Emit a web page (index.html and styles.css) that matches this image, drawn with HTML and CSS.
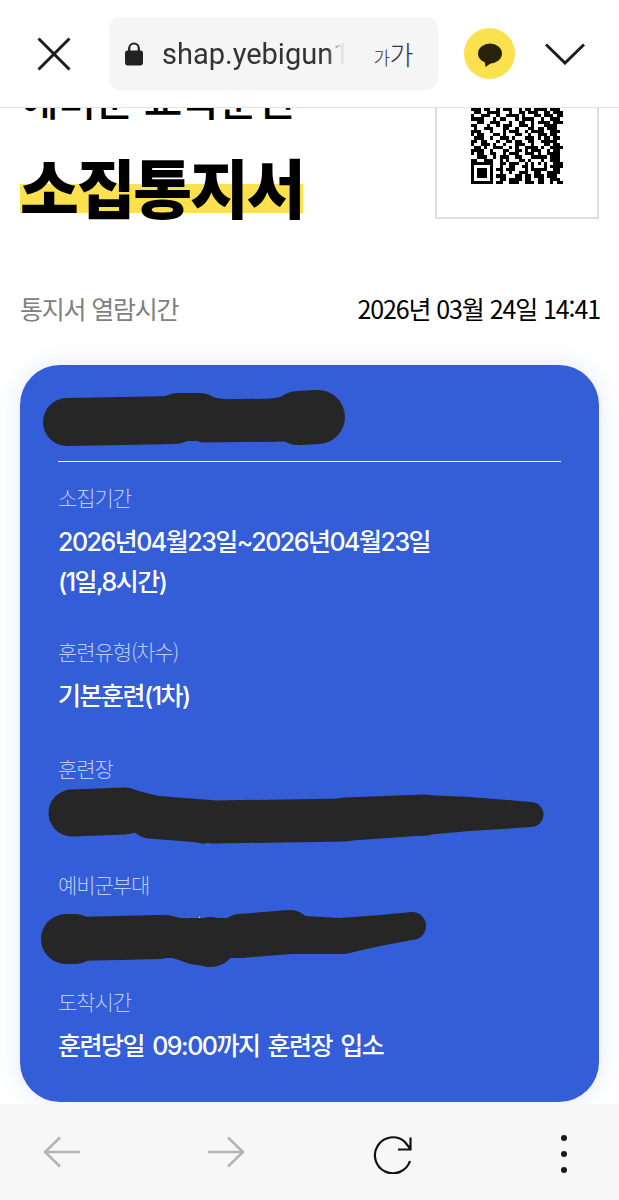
FILE: index.html
```html
<!DOCTYPE html>
<html lang="ko">
<head>
<meta charset="utf-8">
<title>소집통지서</title>
<link rel="stylesheet" href="styles.css">
</head>
<body>
<div class="screen">
  <header class="topbar">
    <button class="icon-btn close-btn" aria-label="닫기">
      <svg width="34" height="34" viewBox="0 0 34 34"><path d="M1.5 1.5 32.5 32.5M32.5 1.5 1.5 32.5" class="ink-line"/></svg>
    </button>
    <div class="url-pill">
      <svg class="lock" width="20" height="24" viewBox="0 0 20 24"><path d="M5.2 9V6.3a4.8 4.8 0 0 1 9.6 0V9" fill="none" stroke="#222" stroke-width="2.2"/><rect x="1" y="8.5" width="18" height="15" rx="2.4" fill="#222"/></svg>
      <span class="url-text">shap.yebigun1</span>
      <span class="text-size"><span class="small">가</span>가</span>
    </div>
    <span class="kakao">
      <svg width="26" height="24" viewBox="0 0 26 24"><ellipse cx="13" cy="10.500" rx="12" ry="10" fill="#2a2208"/><path d="M7.500 17 8.500 24 15 19.500Z" fill="#2a2208"/></svg>
    </span>
    <button class="icon-btn chevron-btn" aria-label="펼치기">
      <svg width="40" height="22" viewBox="0 0 40 22"><path d="M1 1.500 20 20 39 1.500" class="ink-line"/></svg>
    </button>
  </header>

  <main class="content">
    <section class="hero">
      <div class="hero-titles">
        <p class="subtitle">예비군 교육훈련</p>
        <h1 class="title"><span class="marker">소집통지서</span></h1>
      </div>
      <div class="qr-box">
        <svg class="qr" width="92" height="92" viewBox="0 0 29 29" shape-rendering="crispEdges">
          <path class="qr-ink" d="M0 5.500h3m1 0h2m2 0h1m1 0h3m2 0h1m1 0h2m1 0h4m1 0h3
          M1 6.500h2m2 0h4m3 0h1m2 0h2m1 0h3m2 0h2m1 0h3
          M0 7.500h1m2 0h3m2 0h1m2 0h4m1 0h1m3 0h2m1 0h3m1 0h2
          M0 8.500h4m3 0h1m1 0h2m3 0h1m1 0h4m2 0h1m2 0h3
          M2 9.500h2m2 0h3m3 0h1m2 0h2m2 0h1m1 0h4m1 0h3
          M0 10.500h2m3 0h1m2 0h1m1 0h3m2 0h3m1 0h1m3 0h4
          M1 11.500h1m2 0h3m3 0h2m2 0h1m3 0h2m1 0h2m1 0h3
          M0 12.500h3m3 0h1m3 0h1m1 0h3m2 0h1m1 0h4m2 0h3
          M0 13.500h1m1 0h2m3 0h2m1 0h1m3 0h2m2 0h1m2 0h3m1 0h2
          M1 14.500h3m2 0h1m2 0h3m1 0h1m3 0h3m1 0h1m1 0h2m1 0h2
          M0 15.500h2m1 0h2m3 0h1m2 0h2m1 0h2m2 0h2m2 0h5
          M0 16.500h1m2 0h3m1 0h1m2 0h1m3 0h3m2 0h1m3 0h2m1 0h2
          M1 17.500h2m1 0h1m2 0h3m2 0h1m1 0h1m2 0h4m1 0h1m2 0h4
          M0 18.500h4m2 0h1m3 0h2m2 0h2m1 0h1m1 0h3m2 0h1m1 0h2
          M0 19.500h1m1 0h2m2 0h2m2 0h1m1 0h3m2 0h3m1 0h1m2 0h4
          M2 20.500h3m2 0h1m1 0h3m2 0h2m3 0h5m1 0h3
          M0 21.500h2m2 0h3m2 0h1m1 0h1m3 0h2m1 0h1m3 0h1m2 0h3
          M0 22.500h7m2 0h2m1 0h3m2 0h1m1 0h1m1 0h1m1 0h1m2 0h3
          M0 23.500h1m5 0h1m2 0h1m2 0h2m2 0h2m1 0h1m3 0h1m1 0h4
          M0 24.500h1m1 0h3m1 0h1m1 0h2m1 0h3m3 0h1m1 0h5m2 0h2
          M0 25.500h1m1 0h3m1 0h1m2 0h1m2 0h1m2 0h3m2 0h2m2 0h4
          M0 26.500h1m1 0h3m1 0h1m1 0h3m3 0h2m1 0h2m1 0h3m1 0h3
          M0 27.500h1m5 0h1m2 0h2m1 0h4m1 0h2m2 0h2m2 0h3
          M0 28.500h7m1 0h2m2 0h3m2 0h3m1 0h2m2 0h1m1 0h2"/>
        </svg>
      </div>
    </section>

    <div class="meta-row">
      <span class="meta-label">통지서 열람시간</span>
      <span class="meta-value">2026년 03월 24일 14:41</span>
    </div>

    <section class="card">
      <div class="card-name"></div>
      <div class="field field-first">
        <p class="field-label">소집기간</p>
        <p class="field-value">2026년04월23일~2026년04월23일<br>(1일,8시간)</p>
      </div>
      <div class="field">
        <p class="field-label">훈련유형(차수)</p>
        <p class="field-value">기본훈련(1차)</p>
      </div>
      <div class="field">
        <p class="field-label">훈련장</p>
        <p class="field-value field-hidden">&nbsp;</p>
      </div>
      <div class="field">
        <p class="field-label">예비군부대</p>
        <p class="field-value field-hidden">&nbsp;</p>
      </div>
      <div class="field">
        <p class="field-label">도착시간</p>
        <p class="field-value">훈련당일 09:00까지 훈련장 입소</p>
      </div>
      <svg class="redactions" viewBox="20 365 579 737" aria-hidden="true">
        <path class="speck" d="M185 921l2-4 1 4zM196 921l4-5-1 6z"/>
        <g class="marker-stroke">
          <path d="M67 422 175 420" stroke-width="48"/>
          <path d="M178 417 200 417" stroke-width="48"/>
          <path d="M205 421 285 420" stroke-width="43"/>
          <path d="M298 418 318 417" stroke-width="54"/>

          <path d="M72 813 125 811" stroke-width="47"/>
          <path d="M150 817 215 822 345 820" stroke-width="43"/>
          <path d="M345 818 425 815" stroke-width="41"/>
          <path d="M531 814.500 531 814.500" stroke-width="25"/>

          <path d="M66 939 75 939" stroke-width="50"/>
          <path d="M75 939 160 937" stroke-width="44"/>
          <path d="M160 938 240 938" stroke-width="40"/>
          <path d="M210 942 211 942" stroke-width="50"/>
          <path d="M240 936 290 932" stroke-width="44"/>
          <path d="M412 926 412 926" stroke-width="28"/>
        </g>
        <path class="taper" d="M150 399 180 393 205 396 235 401V415H150Z"/>
        <path class="taper" d="M250 401 275 398 300 392 320 390V410H250Z"/>
        <path class="taper" d="M270 442 295 439 310 444V425H270Z"/>
        <path class="taper" d="M110 790 135 790 170 799 215 801V815H110Z"/>
        <path class="taper" d="M110 834 130 832 170 838 205 844V820H110Z"/>
        <path class="taper" d="M345 841 430 835V815H345Z"/>
        <path class="taper" d="M425 795 470 797 531 802V827L470 831 425 835Z"/>
        <path class="taper" d="M288 910 305 916 340 918 380 915 412 912V940L380 946 345 954 290 954Z"/>
        <path class="taper" d="M150 917 168 915 192 921 230 918V950H150Z"/>
        <path class="taper" d="M120 960 150 958 170 957 190 964 210 967V940H120Z"/>
      </svg>
    </section>
  </main>

  <nav class="bottombar">
    <svg class="nav-icon" width="38" height="32" viewBox="0 0 38 32"><path d="M37 16H2M17 1.500 2 16 17 30.500" class="muted-line"/></svg>
    <svg class="nav-icon" width="38" height="32" viewBox="0 0 38 32"><path d="M1 16H36M21 1.500 36 16 21 30.500" class="muted-line"/></svg>
    <svg class="nav-icon reload" width="40" height="38" viewBox="0 0 40 38"><path d="M37 25A18 18 0 1 1 31.500 5.500L37.500 13M37.500 1.500V13.500H25" class="ink-thin"/></svg>
    <span class="dots"><i></i><i></i><i></i></span>
  </nav>
</div>
</body>
</html>
```

FILE: styles.css
```css
* { box-sizing: border-box; }
html, body { margin: 0; padding: 0; background: #fff; }
body { font-family: "Noto Sans CJK KR", "Noto Sans", sans-serif; color: #000; }
p, h1 { margin: 0; }

.screen { width: 619px; height: 1200px; display: flex; flex-direction: column; overflow: hidden; }

/* top browser bar */
.topbar {
  height: 108px; flex: none; background: #fff; border-bottom: 1px solid #e4e4e4;
  display: flex; align-items: center; padding: 0 33px 0 37px;
}
.icon-btn { border: 0; padding: 0; background: none; display: flex; }
.ink-line { fill: none; stroke: #1c1c1c; stroke-width: 3; }
.close-btn { margin-right: 38px; }
.url-pill {
  width: 329px; height: 73px; background: #f5f5f5; border-radius: 12px;
  display: flex; align-items: center; padding: 0 25px 0 15px; margin-top: 0;
}
.lock { flex: none; margin-right: 18px; }
.url-text {
  width: 184px; overflow: hidden; white-space: nowrap; font-family: Roboto, sans-serif;
  font-size: 29px; color: #333; flex: none;
  -webkit-mask-image: linear-gradient(to right, #000 90%, rgba(0, 0, 0, .1) 97%);
  mask-image: linear-gradient(to right, #000 90%, rgba(0, 0, 0, .1) 97%);
}
.text-size { margin-left: auto; font-size: 26px; color: #333; letter-spacing: -.5px; line-height: 1; font-weight: 300; }
.small { font-size: 18px; }
.kakao {
  width: 51px; height: 51px; border-radius: 50%; background: #fbe14e; flex: none;
  display: flex; align-items: center; justify-content: center; margin: 0 30px 0 26px; padding-top: 2px;
}

/* scrolled page content */
.content { flex: 1; min-height: 0; overflow: hidden; padding: 0 20px; }
.hero { display: flex; justify-content: space-between; align-items: flex-end; margin-top: -52px; height: 163px; }
.hero-titles { display: flex; flex-direction: column; align-items: flex-start; }
.subtitle { font-size: 42px; line-height: 48px; font-weight: 500; letter-spacing: -1px; margin-bottom: 28px; }
.title { font-size: 64px; line-height: 70px; font-weight: 900; letter-spacing: -2.200px; margin-bottom: -1px; }
.marker {
  display: inline-block;
  background: linear-gradient(#fbe14e, #fbe14e) no-repeat 0 34px / 100% 29px;
  height: 70px;
}
.qr-box {
  width: 164px; height: 164px; border: 2px solid #dedede; flex: none;
  display: flex; align-items: flex-start; justify-content: flex-start; padding: 35px 0 0 34px;
}
.qr { display: block; flex: none; }
.qr-ink { fill: none; stroke: #000; stroke-width: 1; }

.meta-row { display: flex; justify-content: space-between; align-items: center; margin-top: 71px; height: 36px; }
.meta-label { font-size: 25px; color: #808080; letter-spacing: -1.200px; }
.meta-value { font-size: 25px; letter-spacing: -1.100px; color: #000; margin-right: -1px; }

/* blue card */
.card {
  position: relative; margin-top: 39px; height: 737px; background: #345dd8; border-radius: 40px;
  box-shadow: 0 0 24px rgba(52, 93, 216, .14); padding: 0 38px;
  display: flex; flex-direction: column; gap: 36.800px;
}
.card-name { height: 97px; border-bottom: 1.500px solid #f2f4fc; margin-bottom: -16.800px; flex: none; }
.field { display: flex; flex-direction: column; gap: 10px; }
.field-first { gap: 10px; margin-bottom: -3.100px; }
.field-label { font-size: 21px; line-height: 30px; color: #bccbf3; letter-spacing: -1.100px; font-weight: 300; }
.field-value { font-family: Inter, "Noto Sans CJK KR", sans-serif; font-size: 25px; line-height: 40px; color: #fff; font-weight: 500; letter-spacing: -1.500px; word-spacing: 3px; }
.redactions { position: absolute; inset: 0; width: 579px; height: 737px; }
.marker-stroke { fill: none; stroke: #262626; stroke-linecap: round; stroke-linejoin: round; }
.taper { fill: #262626; }
.speck { fill: #fff; }

/* bottom browser bar */
.bottombar {
  height: 96px; flex: none; background: #f7f7f7; position: relative;
  display: grid; grid-template-columns: 164px 166px 174px 1fr; align-items: center;
  padding: 0 0 0 43px; z-index: 1;
}
.muted-line { fill: none; stroke: #b4b4b4; stroke-width: 2.500; }
.ink-thin { fill: none; stroke: #111; stroke-width: 2.200; }
.reload { margin-top: 5px; }
.dots { display: flex; flex-direction: column; gap: 10px; width: 6px; margin-left: 14px; margin-top: 3px; }
.dots i { width: 6px; height: 6px; border-radius: 50%; background: #1a1a1a; display: block; margin: 0; }
```
